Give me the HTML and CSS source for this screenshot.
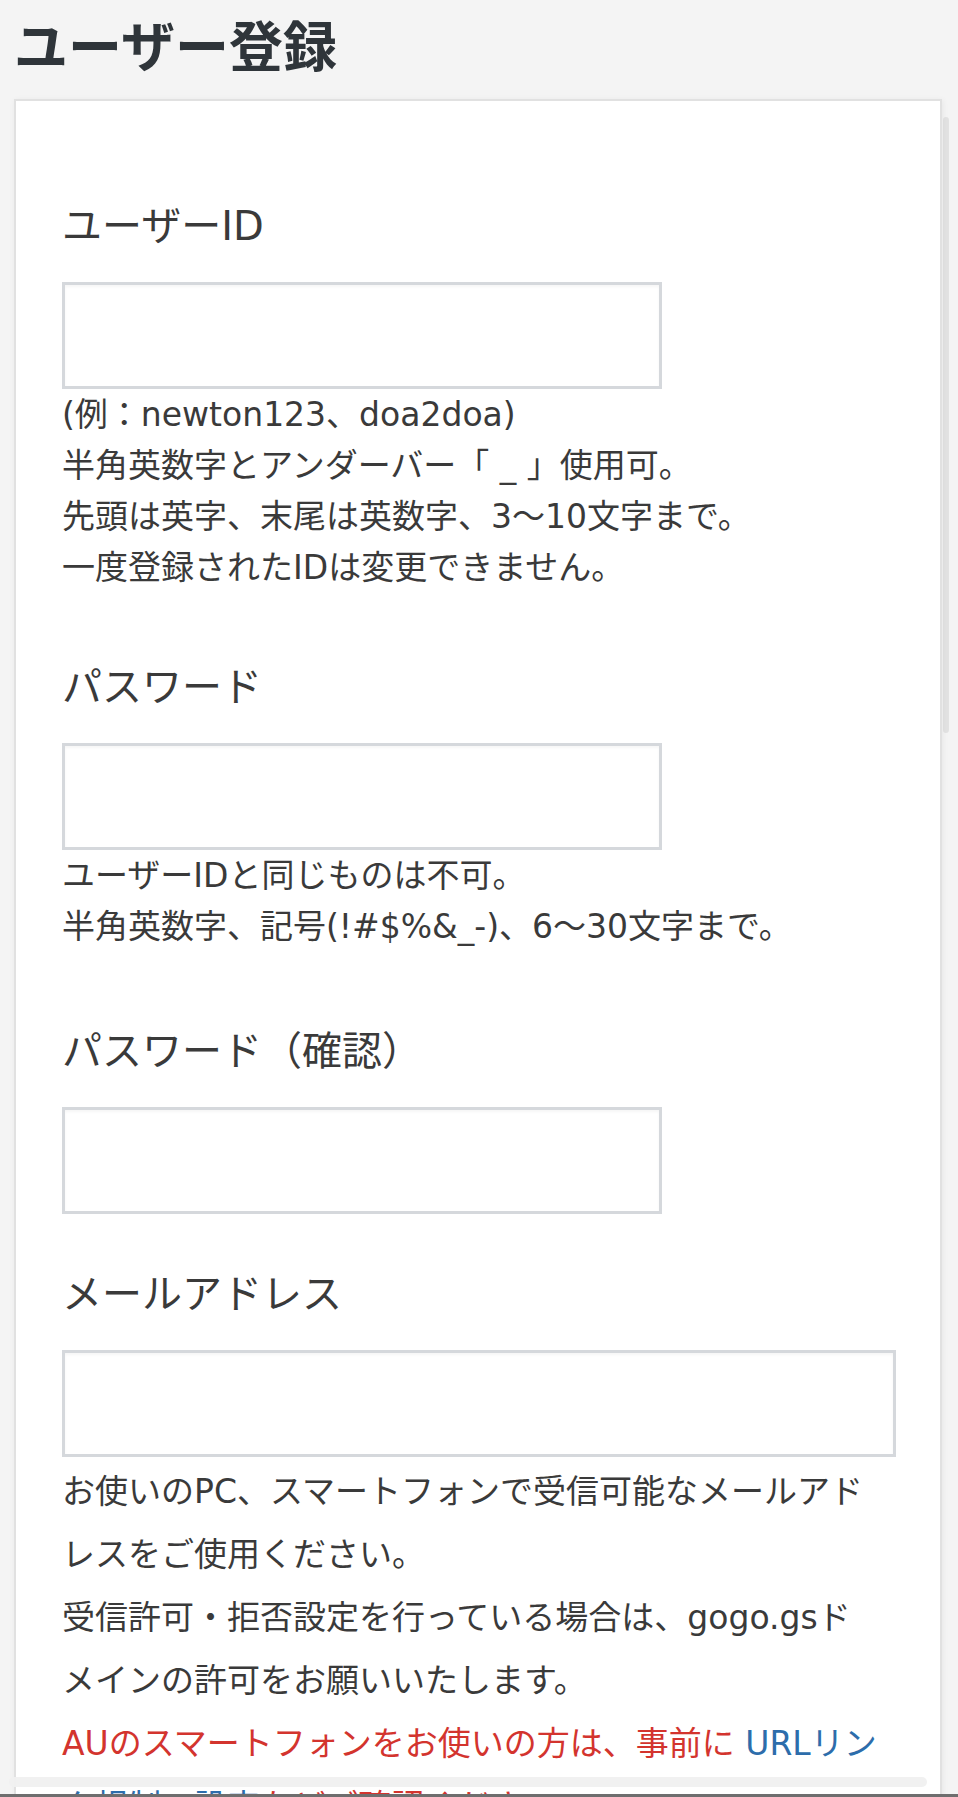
FILE: index.html
```html
<!DOCTYPE html>
<html lang="ja">
<head>
<meta charset="utf-8">
<title>ユーザー登録</title>
<link rel="stylesheet" href="styles.css">
</head>
<body>
<h1 class="page-title">ユーザー登録</h1>
<div class="card">
  <div class="field">
    <label class="field-label">ユーザーID</label>
    <input class="text-input" type="text">
    <p class="help help-id">(例：newton123、doa2doa)<br>半角英数字とアンダーバー「 _ 」使用可。<br>先頭は英字、末尾は英数字、3〜10文字まで。<br>一度登録されたIDは変更できません。</p>
  </div>
  <div class="field">
    <label class="field-label">パスワード</label>
    <input class="text-input" type="password">
    <p class="help help-password">ユーザーIDと同じものは不可。<br>半角英数字、記号(!#$%&amp;_-)、6〜30文字まで。</p>
  </div>
  <div class="field">
    <label class="field-label">パスワード（確認）</label>
    <input class="text-input" type="password">
  </div>
  <div class="field">
    <label class="field-label">メールアドレス</label>
    <input class="text-input text-input-wide" type="email">
    <p class="note">お使いのPC、スマートフォンで受信可能なメールアドレスをご使用ください。<br>受信許可・拒否設定を行っている場合は、gogo.gsドメインの許可をお願いいたします。<br><span class="warn">AUのスマートフォンをお使いの方は、事前に <a class="link" href="#">URLリンク規制の設定</a>などご確認ください。</span></p>
  </div>
</div>
<div class="scroll-thumb"></div>
<div class="bottom-bar"></div>
<div class="bottom-line"></div>
</body>
</html>
```

FILE: styles.css
```css
html, body {
  margin: 0;
  padding: 0;
}

body {
  background: #f4f4f4;
  color: #3a3a3a;
  font-family: "DejaVu Sans", "Noto Sans CJK JP", sans-serif;
}

.page-title {
  margin: 0 0 25px 0;
  padding: 14px 0 0 14px;
  font-family: "Noto Sans CJK JP", sans-serif;
  font-size: 54px;
  font-weight: 700;
  line-height: 60px;
  color: #2f353a;
}

.card {
  margin: 0 16px 0 14px;
  background: #fff;
  border: 2px solid #e1e1e1;
  box-shadow: 1px 1px 6px rgba(0, 0, 0, 0.06);
  padding: 97px 44px 60px 46px;
}

.field {
  margin-bottom: 52px;
}

.field-label {
  display: block;
  font-size: 40px;
  line-height: 56px;
  margin-bottom: 28px;
  color: #3a3a3a;
}

.text-input {
  display: block;
  box-sizing: border-box;
  width: 600px;
  height: 107px;
  margin: 0;
  padding: 0 12px;
  border: 3px solid #d5d8dc;
  border-radius: 0;
  background: #fff;
  box-shadow: inset 0 2px 3px rgba(0, 0, 0, 0.04);
  font-size: 33px;
  outline: none;
}

.text-input-wide {
  width: 100%;
}

.help {
  margin: 0;
  font-size: 33px;
  line-height: 51px;
}

.help-id {
  padding-bottom: 14px;
}

.help-password {
  padding-bottom: 19px;
}

.note {
  margin: 3px 14px 0 0;
  font-size: 33px;
  line-height: 63px;
}

.warn {
  color: #d3342e;
}

.link {
  color: #2d6dab;
  text-decoration: none;
}

.scroll-thumb {
  position: fixed;
  left: 943px;
  top: 117px;
  width: 6px;
  height: 616px;
  border-radius: 3px;
  background: rgba(0, 0, 0, 0.07);
}

.bottom-bar {
  position: fixed;
  left: 9px;
  right: 31px;
  top: 1777px;
  height: 10px;
  border-radius: 5px;
  background: rgba(240, 240, 240, 0.95);
}

.bottom-line {
  position: fixed;
  left: 0;
  right: 0;
  top: 1794px;
  height: 3px;
  background: #6e6e6e;
}
```
